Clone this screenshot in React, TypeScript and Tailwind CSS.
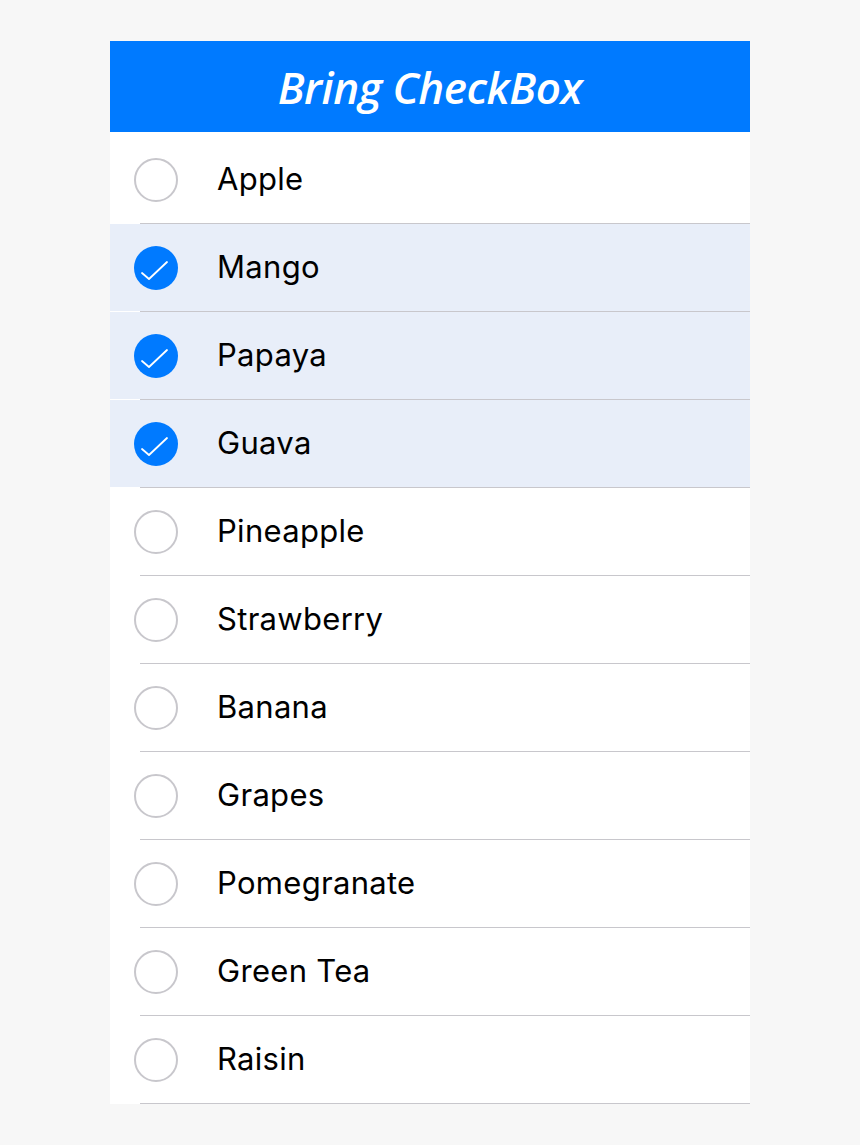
import React from 'react'

const fruits = [
  { label: 'Apple', checked: false },
  { label: 'Mango', checked: true },
  { label: 'Papaya', checked: true },
  { label: 'Guava', checked: true },
  { label: 'Pineapple', checked: false },
  { label: 'Strawberry', checked: false },
  { label: 'Banana', checked: false },
  { label: 'Grapes', checked: false },
  { label: 'Pomegranate', checked: false },
  { label: 'Green Tea', checked: false },
  { label: 'Raisin', checked: false },
]

function Circle({ checked }: { checked: boolean }) {
  if (checked) {
    return (
      <div className="w-[44px] h-[44px] rounded-full bg-[#007aff] flex items-center justify-center shrink-0">
        <svg width="44" height="44" viewBox="0 0 44 44">
          <path d="M8 27 L15 33 L33 16" fill="none" stroke="#fff" strokeWidth="1.8" strokeLinecap="round" strokeLinejoin="round" />
        </svg>
      </div>
    )
  }
  return <div className="w-[44px] h-[44px] rounded-full border-[2px] border-[#c8c7cc] bg-white shrink-0" />
}

export default function App() {
  return (
    <div className="min-h-[1145px] bg-[#f7f7f7] pt-[41px]">
      <div className="w-[640px] mx-auto bg-white">
        <div className="h-[91px] bg-[#007aff] flex items-center justify-center">
          <h1 className="text-white text-[44px] italic font-semibold tracking-[-0.5px]" style={{ fontFamily: '"Open Sans", "Noto Sans", sans-serif' }}>
            Bring CheckBox
          </h1>
        </div>
        <div className="pt-[4px]">
          {fruits.map((f) => (
            <div key={f.label}>
              <div className={`h-[87px] flex items-center pl-[24px] ${f.checked ? 'bg-[#e8eef9]' : 'bg-white'}`}>
                <Circle checked={f.checked} />
                <span className="ml-[39px] text-[31px] tracking-[0.3px] text-black" style={{ fontFamily: 'Inter, "Noto Sans", sans-serif' }}>
                  {f.label}
                </span>
              </div>
              <div className="h-px bg-[#c8c7cc] ml-[30px]" />
            </div>
          ))}
        </div>
      </div>
    </div>
  )
}
